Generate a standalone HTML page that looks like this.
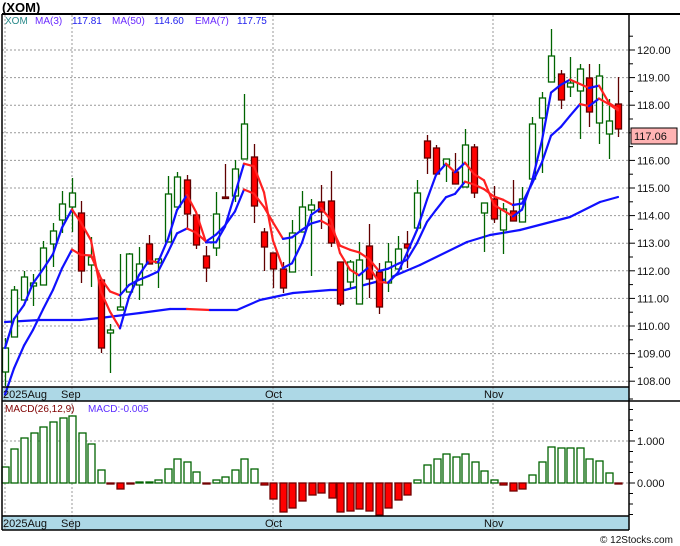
<!DOCTYPE html>
<html><head><meta charset="utf-8"><style>
html,body{margin:0;padding:0;background:#fff;width:680px;height:546px;overflow:hidden}
svg{display:block;font-family:"Liberation Sans",sans-serif}
</style></head><body>
<svg id="c" width="680" height="546" xmlns="http://www.w3.org/2000/svg">
<rect width="680" height="546" fill="#fff"/>
<g id="grid"></g>
<rect x="2" y="387" width="627" height="14" fill="#add8e6"/>
<rect x="2" y="516" width="627" height="14" fill="#add8e6"/>
<g id="vgrid"></g>
<g id="plot"></g>
<line x1="2" y1="14" x2="680" y2="14" stroke="#000" stroke-width="2"/>
<line x1="2" y1="14" x2="2" y2="530" stroke="#000" stroke-width="1.5"/>
<line x1="629" y1="14" x2="629" y2="530" stroke="#000" stroke-width="1.5"/>
<line x1="2" y1="387" x2="629" y2="387" stroke="#000" stroke-width="1.5"/>
<line x1="2" y1="401" x2="680" y2="401" stroke="#000" stroke-width="1.5"/>
<line x1="2" y1="516" x2="629" y2="516" stroke="#000" stroke-width="1.5"/>
<line x1="2" y1="530" x2="629" y2="530" stroke="#000" stroke-width="1.5"/>
<g id="ticks"></g>
<text x="2" y="12" font-size="13" font-weight="bold" fill="#000">(XOM)</text>
<text y="24" font-size="10"><tspan x="5" fill="#2a8a8a">XOM</tspan><tspan x="35" fill="#6a2aff">MA(3)</tspan><tspan x="72" fill="#2222ee">117.81</tspan><tspan x="112" fill="#6a2aff">MA(50)</tspan><tspan x="154" fill="#2222ee">114.60</tspan><tspan x="195" fill="#6a2aff">EMA(7)</tspan><tspan x="237" fill="#2222ee">117.75</tspan></text>
<text y="412" font-size="10"><tspan x="5" fill="#800000">MACD(26,12,9)</tspan><tspan x="88" fill="#5a2aff">MACD:-0.005</tspan></text>
<g font-size="11" fill="#111">
<text x="3" y="398">2025Aug</text><text x="61" y="398">Sep</text><text x="265" y="398">Oct</text><text x="484" y="398">Nov</text>
<text x="3" y="527">2025Aug</text><text x="61" y="527">Sep</text><text x="265" y="527">Oct</text><text x="484" y="527">Nov</text>
</g>
<g id="labels" font-size="11" fill="#111"></g>
<rect x="631" y="128" width="46" height="16" fill="#ffb3b3" stroke="#000" stroke-width="1"/>
<text x="634" y="140" font-size="11" fill="#111">117.06</text>
<text x="600" y="543" font-size="10" fill="#111">© 12Stocks.com</text>
</svg>
<script>
var NS="http://www.w3.org/2000/svg";
function el(p,t,a){var e=document.createElementNS(NS,t);for(var k in a)e.setAttribute(k,a[k]);document.getElementById(p).appendChild(e);return e;}
function py(p){return 50+(120-p)*27.6;}
for(var p=108;p<=120;p++){var y=py(p);
 el("grid","line",{x1:2,y1:y,x2:629,y2:y,stroke:"#999","stroke-dasharray":"2,2","stroke-width":1});
 el("ticks","line",{x1:629,y1:y,x2:635,y2:y,stroke:"#000"});
 el("ticks","line",{x1:629,y1:y-13.8,x2:633,y2:y-13.8,stroke:"#000"});
 var t=el("labels","text",{x:637,y:y+4});t.textContent=p.toFixed(2);
}
[441,483].forEach(function(y){el("grid","line",{x1:2,y1:y,x2:629,y2:y,stroke:"#999","stroke-dasharray":"2,2"});});
for(var y=399;y<=515;y+=10.5){el("ticks","line",{x1:629,y1:y,x2:633,y2:y,stroke:"#000"});}
el("ticks","line",{x1:629,y1:441,x2:635,y2:441,stroke:"#000"});el("ticks","line",{x1:629,y1:483,x2:635,y2:483,stroke:"#000"});
var t=el("labels","text",{x:637,y:445});t.textContent="1.000";
t=el("labels","text",{x:637,y:487});t.textContent="0.000";
[5,72,273,493].forEach(function(x){el("vgrid","line",{x1:x,y1:15,x2:x,y2:530,stroke:"#999","stroke-dasharray":"2,2"});});
var C=[[5,372,348,338,386],[14,337,290,286,337],[24,300,277,271,300],[33,286,283,274,306],[43,285,248,241,285],[53,244,231,223,267],[62,220,204,191,233],[72,207,193,178,232],[81,213,271,201,283],[91,265,257,237,287],[101,280,348,280,353],[110,333,330,324,373],[120,310,307,254,310],[129,292,254,253,292],[139,285,264,247,300],[149,244,264,235,264],[158,263,259,258,288],[168,242,194,176,242],[177,207,177,172,207],[187,180,214,175,228],[196,215,245,215,249],[206,256,268,246,282],[216,248,214,192,256],[225,197,198,164,199],[235,196,169,160,202],[244,159,124,94,159],[254,157,206,144,223],[264,232,247,228,271],[273,253,269,253,288],[283,269,288,262,293],[292,272,233,220,272],[302,232,207,191,232],[311,210,205,199,276],[321,202,212,185,229],[331,201,243,171,247],[340,262,304,262,306],[350,282,262,260,288],[359,304,260,242,304],[369,246,279,224,298],[379,272,307,263,314],[388,283,262,243,292],[398,269,249,236,269],[407,244,248,231,268],[417,228,193,180,228],[427,141,158,135,174],[436,148,174,145,174],[446,165,159,159,182],[455,172,184,153,184],[465,187,145,129,187],[474,147,193,144,198],[484,213,203,203,252],[494,199,219,186,223],[503,230,209,203,254],[513,211,221,180,221],[522,222,199,187,222],[532,179,124,117,179],[542,118,98,92,173],[551,82,56,29,82],[561,74,100,70,109],[570,87,83,57,97],[580,91,69,64,139],[589,78,112,64,127],[599,123,76,64,144],[609,134,121,99,159],[618,104,129,77,137]];
function poly(pts){for(var i=1;i<pts.length;i++){var a=pts[i-1],b=pts[i];el("plot","line",{x1:a[0],y1:a[1],x2:b[0],y2:b[1],stroke:b[1]<=a[1]?"#1010ff":"#ff2020","stroke-width":2.2,"stroke-linecap":"round"});}}
var M=[[5,322],[40,320],[80,320],[100,318],[140,313],[170,309],[187,309],[210,310],[237,310],[260,300],[293,293],[330,290],[345,290],[387,279],[420,265],[467,242],[490,235],[520,230],[570,217],[600,202],[618,197]];
for(var i=1;i<M.length;i++){var a=M[i-1],b=M[i];el("plot","line",{x1:a[0],y1:a[1],x2:b[0],y2:b[1],stroke:(i==7?"#ff2020":"#1010ff"),"stroke-width":2.2,"stroke-linecap":"round"});}
C.forEach(function(c){var up=c[2]<c[1];
 var wc=up?"#006400":"#600000";
 el("plot","line",{x1:c[0]+0.5,y1:c[3],x2:c[0]+0.5,y2:c[4],stroke:wc,"stroke-width":1.3});
 var top=Math.min(c[1],c[2]),h=Math.max(Math.abs(c[1]-c[2]),1.5);
 el("plot","rect",{x:c[0]-2.5,y:top,width:6,height:h,fill:up?"#fff":"#ff0000",stroke:wc,"stroke-width":1.3});
});
var e=410,E=[],A=[];
C.forEach(function(c,i){e=e*0.75+c[2]*0.25;E.push([c[0],e]);var s=0,n=0;for(var j=Math.max(0,i-2);j<=i;j++){s+=C[j][2];n++;}A.push([c[0],s/n]);});
poly(E);poly(A);
var H=[[5,467],[14,449],[24,438],[34,433],[43,427],[53,422],[63,418],[72,416],[82,433],[91,444],[101,470],[110,484],[120,489],[130,484],[139,482],[149,482],[158,480],[168,469],[177,459],[187,462],[196,472],[206,483],[216,480],[225,477],[235,470],[244,459],[254,469],[264,485],[273,499],[283,512],[292,508],[302,501],[312,495],[321,493],[332,498],[340,512],[350,511],[359,509],[369,511],[379,515],[388,508],[398,500],[407,495],[417,480],[427,465],[437,459],[446,454],[456,457],[465,454],[475,462],[484,471],[494,480],[503,485],[513,491],[522,489],[532,475],[542,462],[551,447],[561,448],[570,448],[580,448],[589,459],[599,461],[609,473],[618,484]];
H.forEach(function(b){var up=b[1]<483;var top=Math.min(b[1],483),h=Math.max(Math.abs(b[1]-483),1);
 el("plot","rect",{x:b[0]-3,y:top,width:7,height:h,fill:up?"#fff":"#ff0000",stroke:up?"#006400":"#700000","stroke-width":1.3});});
</script>
</body></html>
